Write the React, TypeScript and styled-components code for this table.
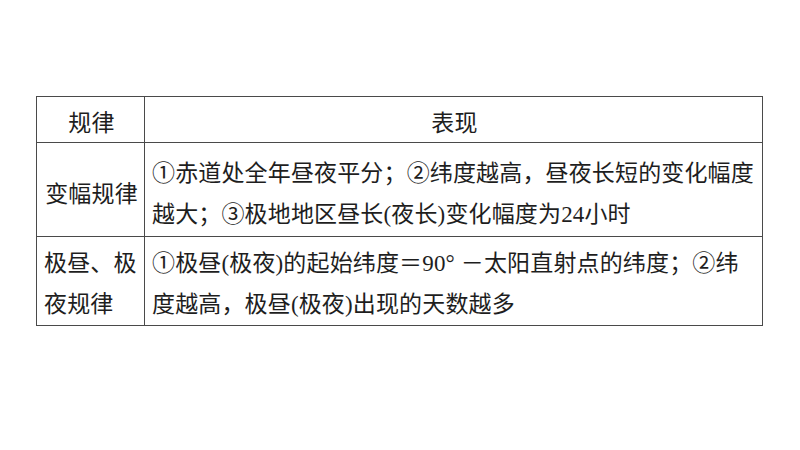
import styled, { createGlobalStyle } from "styled-components";

const GlobalStyle = createGlobalStyle`
  html, body {
    margin: 0;
    padding: 0;
    background: #ffffff;
  }
  body {
    font-family: "Liberation Serif", "Noto Sans CJK SC", serif;
    color: #1e1e1e;
  }
`;

const Page = styled.div`
  width: 800px;
  height: 450px;
  padding: 96px 0 0 36px;
  box-sizing: border-box;
`;

const Table = styled.table`
  border-collapse: collapse;
  width: 727px;
  table-layout: fixed;
  font-size: 23px;
  letter-spacing: 0.15px;
`;

const Row = styled.tr<{ $h: number }>`
  height: ${(p) => p.$h}px;
`;

const Cell = styled.td<{ $center?: boolean; $w?: number; $top?: number }>`
  border: 1.5px solid #4a4a4a;
  padding: ${(p) => p.$top ?? 0}px 5px 0 7px;
  vertical-align: top;
  text-align: ${(p) => (p.$center ? "center" : "left")};
  ${(p) => (p.$w ? `width: ${p.$w}px;` : "")}
  line-height: 41px;
  box-sizing: border-box;
`;

const HeadCell = styled(Cell)`
  padding-top: 13px;
  line-height: 28px;
`;

const Line = styled.div`
  white-space: nowrap;
  line-height: 41px;
`;

export default function App() {
  return (
    <>
      <GlobalStyle />
      <Page>
        <Table>
          <tbody>
            <Row $h={46}>
              <HeadCell $center $w={108}>规律</HeadCell>
              <HeadCell $center>表现</HeadCell>
            </Row>
            <Row $h={94}>
              <Cell $center $top={31}>变幅规律</Cell>
              <Cell $top={10}>
                <Line>①赤道处全年昼夜平分；②纬度越高，昼夜长短的变化幅度</Line>
                <Line>越大；③极地地区昼长(夜长)变化幅度为24小时</Line>
              </Cell>
            </Row>
            <Row $h={87}>
              <Cell $top={6}>
                <Line>极昼、极</Line>
                <Line>夜规律</Line>
              </Cell>
              <Cell $top={6}>
                <Line>①极昼(极夜)的起始纬度＝90° －太阳直射点的纬度；②纬</Line>
                <Line>度越高，极昼(极夜)出现的天数越多</Line>
              </Cell>
            </Row>
          </tbody>
        </Table>
      </Page>
    </>
  );
}
